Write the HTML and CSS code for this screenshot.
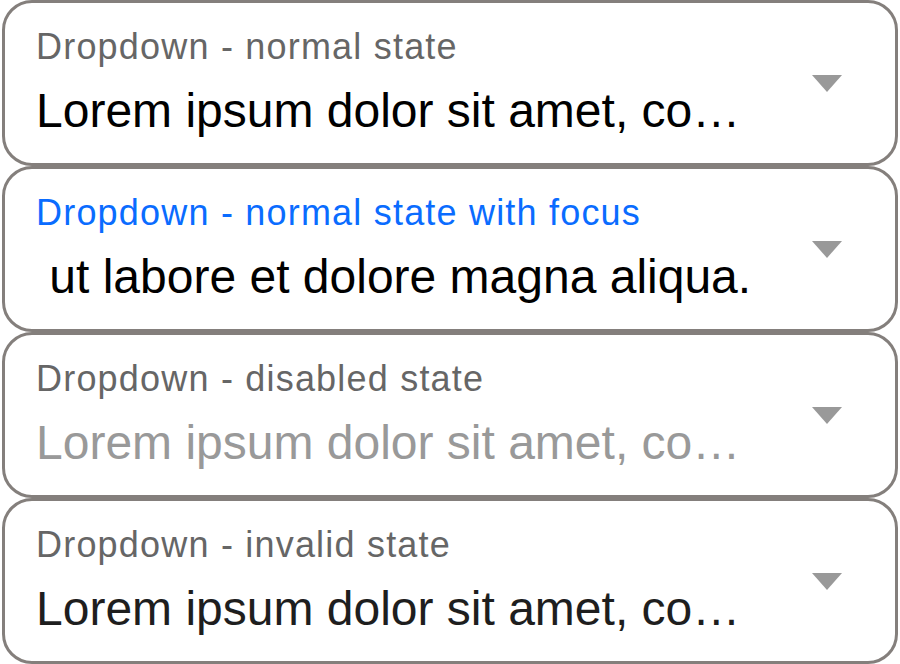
FILE: index.html
```html
<!DOCTYPE html>
<html>
<head>
<meta charset="utf-8">
<link rel="stylesheet" href="styles.css">
</head>
<body>
<div class="list">
  <div class="dropdown">
    <div class="content">
      <div class="label">Dropdown - normal state</div>
      <div class="value">Lorem ipsum dolor sit amet, co…</div>
    </div>
    <svg class="caret" width="30" height="17" viewBox="0 0 30 17"><polygon points="0,0 30,0 15,17"/></svg>
  </div>
  <div class="dropdown focus">
    <div class="content">
      <div class="label">Dropdown - normal state with focus</div>
      <div class="value">&nbsp;ut labore et dolore magna aliqua.</div>
    </div>
    <svg class="caret" width="30" height="17" viewBox="0 0 30 17"><polygon points="0,0 30,0 15,17"/></svg>
  </div>
  <div class="dropdown disabled">
    <div class="content">
      <div class="label">Dropdown - disabled state</div>
      <div class="value">Lorem ipsum dolor sit amet, co…</div>
    </div>
    <svg class="caret" width="30" height="17" viewBox="0 0 30 17"><polygon points="0,0 30,0 15,17"/></svg>
  </div>
  <div class="dropdown invalid">
    <div class="content">
      <div class="label">Dropdown - invalid state</div>
      <div class="value">Lorem ipsum dolor sit amet, co…</div>
    </div>
    <svg class="caret" width="30" height="17" viewBox="0 0 30 17"><polygon points="0,0 30,0 15,17"/></svg>
  </div>
</div>
</body>
</html>
```

FILE: styles.css
```css
html, body {
  margin: 0;
  padding: 0;
  background: #ffffff;
}

body {
  font-family: "Liberation Sans", Arial, sans-serif;
}

.list {
  display: flex;
  flex-direction: column;
  padding: 0 2px 0 2px;
}

.dropdown {
  box-sizing: border-box;
  height: 166px;
  border: 3px solid #847f7c;
  border-radius: 30px;
  display: flex;
  align-items: center;
  background: #ffffff;
}

.content {
  flex: 1;
  align-self: flex-start;
  padding: 26px 0 0 31px;
  min-width: 0;
}

.label {
  font-size: 36px;
  line-height: 36px;
  letter-spacing: 1.2px;
  color: #666666;
  white-space: nowrap;
}

.value {
  margin-top: 22px;
  font-size: 48px;
  line-height: 48px;
  color: #000000;
  white-space: nowrap;
}

.caret {
  fill: #999999;
  margin-right: 53px;
  flex-shrink: 0;
}

.focus .label {
  color: #0a6cff;
}

.disabled .value {
  color: #999999;
}

.invalid .value {
  color: #1e1e1e;
}
```
